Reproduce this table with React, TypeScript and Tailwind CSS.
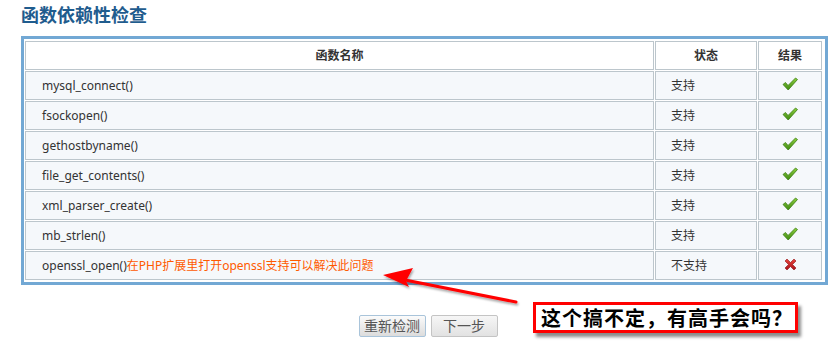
import * as React from "react";

const rows: { name: string; note?: string; ok: boolean }[] = [
  { name: "mysql_connect()", ok: true },
  { name: "fsockopen()", ok: true },
  { name: "gethostbyname()", ok: true },
  { name: "file_get_contents()", ok: true },
  { name: "xml_parser_create()", ok: true },
  { name: "mb_strlen()", ok: true },
  { name: "openssl_open()", note: "在PHP扩展里打开openssl支持可以解决此问题", ok: false },
];

function Check() {
  return (
    <svg width="16" height="14" viewBox="0 0 16 14" className="inline-block">
      <defs>
        <linearGradient id="ck" x1="0" y1="0" x2="0" y2="1">
          <stop offset="0" stopColor="#8ccf3c" />
          <stop offset="1" stopColor="#3f8a12" />
        </linearGradient>
      </defs>
      <path d="M1 7.5 L3.5 5.5 L6 8.5 L13.5 1 L15.5 2.5 L6.2 13 Z" fill="url(#ck)" stroke="#3b7d14" strokeWidth="0.8" strokeLinejoin="round" />
    </svg>
  );
}

function Cross() {
  return (
    <svg width="13" height="13" viewBox="0 0 13 13" className="inline-block">
      <defs>
        <linearGradient id="cx" x1="0" y1="0" x2="0" y2="1">
          <stop offset="0" stopColor="#e8443c" />
          <stop offset="1" stopColor="#a8121a" />
        </linearGradient>
      </defs>
      <path d="M1 3 L3 1 L6.5 4.5 L10 1 L12 3 L8.5 6.5 L12 10 L10 12 L6.5 8.5 L3 12 L1 10 L4.5 6.5 Z" fill="url(#cx)" stroke="#8e1016" strokeWidth="0.6" strokeLinejoin="round" />
    </svg>
  );
}

const cell = "border border-[#bcc6cc] h-[29px] p-0 text-[12px]";

export default function App() {
  return (
    <div
      className="relative w-[835px] h-[348px] bg-white text-[#333]"
      style={{ fontFamily: '"Noto Sans", "Noto Sans CJK SC", sans-serif' }}
    >
      <div className="pl-[21px] pt-[3px]">
        <h1 className="text-[18px] leading-[24px] font-bold text-[#1f5c8e]">函数依赖性检查</h1>

        <div className="mt-[9px] w-[807px] border-[3px] border-[#72a8d4] pt-[1px] pb-[1px]">
          <table className="w-[799px] border-separate border-spacing-[1px] table-fixed">
            <colgroup>
              <col className="w-[629px]" />
              <col className="w-[102px]" />
              <col className="w-[64px]" />
            </colgroup>
            <thead>
              <tr>
                <th className={`${cell} bg-white font-bold text-center`}>函数名称</th>
                <th className={`${cell} bg-white font-bold text-center`}>状态</th>
                <th className={`${cell} bg-white font-bold text-center`}>结果</th>
              </tr>
            </thead>
            <tbody>
              {rows.map((r) => (
                <tr key={r.name}>
                  <td className={`${cell} bg-[#f5f8fb] pl-[16px]`}>
                    {r.name}
                    {r.note ? <span className="text-[#ff5a00]">{r.note}</span> : null}
                  </td>
                  <td className={`${cell} bg-[#f5f8fb] pl-[15px]`}>{r.ok ? "支持" : "不支持"}</td>
                  <td className={`${cell} bg-[#f5f8fb] text-center`}>
                    <span className="inline-flex items-center justify-center pt-[2px]">
                      {r.ok ? <Check /> : <Cross />}
                    </span>
                  </td>
                </tr>
              ))}
            </tbody>
          </table>
        </div>

        <div className="w-[807px] flex justify-center gap-[5px] pl-[7px] mt-[30px]">
          <button className="h-[22px] w-[67px] border border-[#a9c4da] rounded-[2px] bg-gradient-to-b from-[#fbfbfb] to-[#dcdcdc] text-[14px] leading-[20px] text-[#555]">
            重新检测
          </button>
          <button className="h-[22px] w-[67px] border border-[#c4c4c4] rounded-[2px] bg-gradient-to-b from-[#f6f6f6] to-[#e2e2e2] text-[14px] leading-[20px] text-[#555]">
            下一步
          </button>
        </div>
      </div>

      {/* annotation arrow */}
      <svg className="absolute left-0 top-0 pointer-events-none" width="835" height="348">
        <defs>
          <filter id="sh" x="-10%" y="-50%" width="120%" height="200%">
            <feDropShadow dx="1" dy="2" stdDeviation="1.2" floodColor="#000" floodOpacity="0.35" />
          </filter>
        </defs>
        <g filter="url(#sh)">
          <line x1="516" y1="302" x2="400" y2="279" stroke="#f00" strokeWidth="3" strokeLinecap="round" />
          <path d="M383 275 L413 268 L406 281 L409 287 Z" fill="#f00" />
        </g>
      </svg>

      {/* annotation box */}
      <div className="absolute left-[533px] top-[302px] w-[265px] h-[31px] border-[3px] border-[#f00] bg-white shadow-[3px_4px_3px_rgba(0,0,0,0.45)] flex items-center pl-[5px]">
        <span
          className="text-[20px] leading-[24px] font-bold text-black tracking-[1px]"
          style={{ fontFamily: '"Noto Sans CJK SC", "Noto Sans CJK JP", serif' }}
        >
          这个搞不定，有高手会吗？
        </span>
      </div>
    </div>
  );
}
